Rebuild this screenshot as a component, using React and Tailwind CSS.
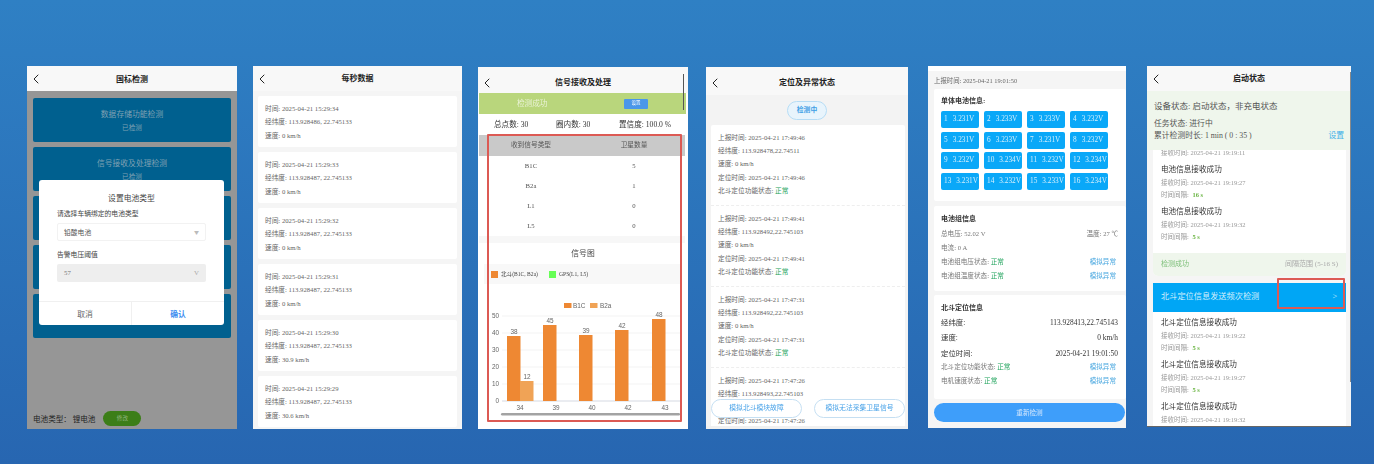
import { ChevronLeft } from 'lucide-react'

const serif = "font-['Liberation_Serif','Noto_Sans_CJK_SC',serif]"

function Header({ title, className = 'h-[25px] pt-[1px]' }) {
  return (
    <div className={`relative flex items-center justify-center shrink-0 bg-[#f8f8f8] ${className}`}>
      <ChevronLeft size={16} strokeWidth={1.5} className="absolute left-[1px] text-[#222]" />
      <span className="text-[8px] font-bold text-[#222]">{title}</span>
    </div>
  )
}

function Ok() {
  return <span className="text-[#22a45d]">正常</span>
}

const seconds = [
  ['15:29:34', '113.928486', '0'],
  ['15:29:33', '113.928487', '0'],
  ['15:29:32', '113.928487', '0'],
  ['15:29:31', '113.928487', '0'],
  ['15:29:30', '113.928487', '30.9'],
  ['15:29:29', '113.928487', '30.6'],
]

const reports = [
  ['17:49:46', '113.928478,22.74511'],
  ['17:49:41', '113.928492,22.745103'],
  ['17:47:31', '113.928492,22.745103'],
  ['17:47:26', '113.928493,22.745103'],
]

const cells = [
  ['1', '3.231V'], ['2', '3.233V'], ['3', '3.233V'], ['4', '3.232V'],
  ['5', '3.231V'], ['6', '3.233V'], ['7', '3.231V'], ['8', '3.232V'],
  ['9', '3.232V'], ['10', '3.234V'], ['11', '3.232V'], ['12', '3.234V'],
  ['13', '3.231V'], ['14', '3.232V'], ['15', '3.233V'], ['16', '3.234V'],
]

const bars = [
  { x: 507, top: 337, label: '38', name: '34' },
  { x: 543, top: 326, label: '45', name: '39' },
  { x: 579, top: 336, label: '39', name: '40' },
  { x: 615, top: 331, label: '42', name: '42' },
  { x: 652, top: 320, label: '48', name: '43' },
]

function SignalChart() {
  // coordinates are page x minus 480, page y minus 285
  return (
    <svg width="200" height="135" viewBox="0 0 200 135" className="block">
      <rect x="84" y="19" width="7.5" height="5" fill="#ee8833" />
      <text x="93" y="24" fontSize="6.4" fill="#666" fontFamily="Liberation Sans">B1C</text>
      <rect x="110" y="19" width="7.5" height="5" fill="#f0a356" />
      <text x="120" y="24" fontSize="6.4" fill="#666" fontFamily="Liberation Sans">B2a</text>
      {[0, 10, 20, 30, 40, 50].map((v, i) => {
        const y = 117 - i * 17
        return (
          <g key={v}>
            <line x1="22" x2="200" y1={y} y2={y} stroke={v === 0 ? '#d5d9e2' : '#eeeeee'} strokeWidth={v === 0 ? 1 : 0.7} />
            <text x="19" y={y + 2.2} fontSize="6.4" fill="#666" textAnchor="end" fontFamily="Liberation Sans">{v}</text>
          </g>
        )
      })}
      {bars.map(b => (
        <g key={b.name}>
          <rect x={b.x - 480} y={b.top - 285} width="13.5" height={402 - b.top} fill="#ee8833" />
          <text x={b.x - 473} y={b.top - 287} fontSize="6.4" fill="#666" textAnchor="middle" fontFamily="Liberation Sans">{b.label}</text>
          <text x={b.x - 467} y="126" fontSize="6.4" fill="#666" textAnchor="middle" fontFamily="Liberation Sans">{b.name}</text>
        </g>
      ))}
      <rect x="40" y="97" width="13.5" height="20" fill="#f0a356" />
      <text x="47" y="95" fontSize="6.4" fill="#666" textAnchor="middle" fontFamily="Liberation Sans">12</text>
      <rect x="21" y="129" width="179" height="2.5" rx="1.2" fill="#a3a3a3" />
    </svg>
  )
}

function StandardPhone() {
  const tests = [
    ['数据存储功能检测', '已检测'],
    ['信号接收及处理检测', '已检测'],
    ['', ''],
    ['', ''],
    ['', ''],
  ]
  return (
    <div className="relative w-[210px] h-[363px] flex flex-col shrink-0 bg-[#969696] overflow-hidden">
      <Header title="国标检测" />
      <div className="flex flex-col gap-[5px] px-[6px] pt-[7px]">
        {tests.map((t, i) => (
          <div key={i} className="h-[44px] rounded-[2px] bg-[#00608f] flex flex-col items-center justify-center gap-[4px] text-[#7fa0b3]">
            <span className="text-[7.8px] leading-[10px]">{t[0]}</span>
            <span className="text-[6.6px] leading-[8px]">{t[1]}</span>
          </div>
        ))}
      </div>
      <div className="mt-auto mb-[3px] flex items-center px-[6px] gap-[8px] h-[15px]">
        <span className="text-[7.6px] text-[#222]">电池类型： 锂电池</span>
        <span className="w-[38px] h-[15px] rounded-full bg-[#3c7e18] flex items-center justify-center text-[5.6px] text-[#8fb37c]">修改</span>
      </div>
      <div className="absolute left-[12px] top-[114px] w-[185px] h-[145px] rounded-[3px] bg-white flex flex-col">
        <div className="text-center text-[7.8px] leading-[10px] text-[#444] mt-[13px]">设置电池类型</div>
        <div className="px-[18px] mt-[6px] text-[6.8px] text-[#444]">
          <div className="leading-[9px]">请选择车辆绑定的电池类型</div>
          <div className="mt-[5px] h-[18px] rounded-[2px] border border-[#f2f2f2] flex items-center justify-between px-[6px] text-[#555]">
            <span>铅酸电池</span>
            <span className="text-[5px] text-[#bbb]">▼</span>
          </div>
          <div className="mt-[9px] leading-[9px]">告警电压阈值</div>
          <div className={`mt-[5px] h-[18px] rounded-[2px] bg-[#eeeeee] flex items-center justify-between px-[7px] text-[#777] ${serif}`}>
            <span>57</span>
            <span className="text-[#aaa]">V</span>
          </div>
        </div>
        <div className="mt-auto h-[24px] border-t border-[#f0f0f0] flex text-[7.8px]">
          <div className="flex-1 flex items-center justify-center text-[#666] border-r border-[#f0f0f0]">取消</div>
          <div className="flex-1 flex items-center justify-center text-[#3d8df0] font-bold">确认</div>
        </div>
      </div>
    </div>
  )
}

function SecondsPhone() {
  return (
    <div className={`w-[209px] h-[363px] flex flex-col shrink-0 bg-[#f5f5f5] overflow-hidden ml-[16px] ${serif}`}>
      <Header title="每秒数据" />
      <div className="flex flex-col gap-[5px] px-[5px] pt-[5px]">
        {seconds.map(s => (
          <div key={s[0]} className="h-[51px] shrink-0 rounded-[2px] bg-white px-[7px] pt-[6px] text-[6.7px] leading-[13.4px] text-[#666]">
            <div>时间: 2025-04-21 {s[0]}</div>
            <div>经纬度: {s[1]}, 22.745133</div>
            <div>速度: {s[2]} km/h</div>
          </div>
        ))}
      </div>
    </div>
  )
}

function SignalPhone() {
  return (
    <div className={`relative w-[210px] h-[362px] flex flex-col shrink-0 bg-white overflow-hidden ml-[16px] mt-[1px] ${serif}`}>
      <Header title="信号接收及处理" className="h-[26px] pt-[5px]" />
      <div className="h-[21px] mx-[1px] mr-[2px] shrink-0 bg-[#b9d67c] flex items-center">
        <span className="w-[145px] pl-[38px] text-[7.6px] text-[#e9f2d5]">检测成功</span>
        <span className="w-[24px] h-[10px] rounded-[1px] bg-[#4a97ea] flex items-center justify-center text-[4.5px] text-white">设置</span>
      </div>
      <div className="h-[21px] shrink-0 flex items-center text-[7.6px] text-[#333]">
        <span className="w-[78px] pl-[16px]">总点数: 30</span>
        <span className="w-[63px]">圈内数: 30</span>
        <span>置信度: 100.0 %</span>
      </div>
      <div className="mx-[1px] mr-[3px] flex flex-col text-[6.7px] text-[#555]">
        <div className="h-[21px] bg-[#c9c9c9] flex items-center text-center">
          <span className="w-[104px]">收到信号类型</span>
          <span className="flex-1">卫星数量</span>
        </div>
        {[['B1C', '5'], ['B2a', '1'], ['L1', '0'], ['L5', '0']].map(r => (
          <div key={r[0]} className="h-[20px] flex items-center text-center">
            <span className="w-[104px]">{r[0]}</span>
            <span className="flex-1">{r[1]}</span>
          </div>
        ))}
      </div>
      <div className="h-[7px] mx-[1px] mr-[3px] shrink-0 bg-[#f7f7f7]" />
      <div className="h-[21px] shrink-0 flex items-center justify-center text-[7.8px] text-[#444]">信号图</div>
      <div className="mx-[6px] mr-[8px] h-[20px] shrink-0 bg-[#f8f8f8] flex items-center px-[7px] text-[5.6px] text-[#444]">
        <span className="w-[7px] h-[7px] bg-[#ee8833] mr-[3px]" />
        <span className="w-[48px]">北斗(B1C, B2a)</span>
        <span className="w-[7px] h-[7px] bg-[#66ff55] mr-[3px]" />
        <span>GPS(L1, L5)</span>
      </div>
      <div className="ml-[2px]">
        <SignalChart />
      </div>
      <div className="absolute left-[9px] top-[67px] w-[195px] h-[288px] border-2 border-[#dc5a54] rounded-[1px]" />
      <div className="absolute right-[4px] top-[7px] w-[1.5px] h-[36px] bg-[#555]" />
    </div>
  )
}

function LocationPhone() {
  return (
    <div className={`relative w-[202px] h-[362px] flex flex-col shrink-0 bg-[#f3f3f3] overflow-hidden ml-[18px] mt-[1px] ${serif}`}>
      <Header title="定位及异常状态" className="h-[28px] pt-[4px]" />
      <div className="h-[30px] shrink-0 flex items-center justify-center">
        <span className="w-[40px] h-[19px] rounded-full bg-[#e8f4fc] border border-[#b5dcf5] flex items-center justify-center text-[6.8px] font-bold text-[#3f9fe6]">检测中</span>
      </div>
      <div className="mx-[5px] mr-[3px] bg-white flex flex-col rounded-t-[2px]">
        {reports.map((r, i) => {
          const last = i === reports.length - 1
          return (
            <div key={r[0]} className="h-[81px] shrink-0 border-b border-dashed border-[#eeeeee] px-[7px] pt-[5.5px] text-[6.7px] leading-[13.4px] text-[#666]">
              <div>上报时间: 2025-04-21 {r[0]}</div>
              <div>经纬度: {r[1]}</div>
              {/* last report: speed row sits behind the buttons, status row is past the fold */}
              <div className={last ? 'invisible' : ''}>速度: 0 km/h</div>
              <div>定位时间: 2025-04-21 {r[0]}</div>
              {!last && <div>北斗定位功能状态: <Ok /></div>}
            </div>
          )
        })}
      </div>
      <div className="absolute left-[5px] right-[3px] top-[332px] flex justify-between text-[6.8px] text-[#4aa3e8]">
        <span className="w-[91px] h-[19px] rounded-full bg-white border border-[#c5dff2] flex items-center justify-center">模拟北斗模块故障</span>
        <span className="w-[91px] h-[19px] rounded-full bg-white border border-[#c5dff2] flex items-center justify-center">模拟无法采集卫星信号</span>
      </div>
      <div className="absolute left-0 right-0 bottom-0 h-[3px] bg-[#f0f0f0]" />
    </div>
  )
}

function StatusRow({ label }) {
  return (
    <div className="flex justify-between pr-[2px] text-[#777]">
      <span>{label}: <Ok /></span>
      <span className="text-[#4aa8e0]">模拟异常</span>
    </div>
  )
}

function BatteryPhone() {
  return (
    <div className={`w-[198px] h-[362px] flex flex-col shrink-0 bg-[#f5f5f5] overflow-hidden ml-[20px] ${serif}`}>
      <div className="h-[5px] shrink-0 bg-white" />
      <div className="h-[18px] shrink-0 flex items-end pb-[3px] pl-[6px] text-[6.4px] text-[#666]">上报时间: 2025-04-21 19:01:50</div>
      <div className="ml-[6px] h-[112px] shrink-0 bg-white rounded-[2px] px-[7px] pt-[7px]">
        <div className="text-[7px] leading-[10px] font-bold text-[#333]">单体电池信息:</div>
        <div className="grid grid-cols-[repeat(4,37.5px)] gap-x-[5.5px] gap-y-[3.7px] mt-[5px]">
          {cells.map(c => (
            <div key={c[0]} className="h-[17px] rounded-[2px] bg-[#0aa8f8] flex items-center gap-[5px] pl-[3px] text-[7.3px] text-[#d5effc] whitespace-nowrap overflow-hidden">
              <span>{c[0]}</span>
              <span>{c[1]}</span>
            </div>
          ))}
        </div>
      </div>
      <div className="ml-[6px] mt-[5px] h-[85px] shrink-0 bg-white rounded-[2px] px-[7px] pr-[8px] pt-[6px] text-[6.6px] leading-[14px]">
        <div className="text-[7px] font-bold text-[#333] mb-[1px]">电池组信息</div>
        <div className="flex justify-between text-[#777]">
          <span>总电压: 52.02 V</span>
          <span>温度: 27 ℃</span>
        </div>
        <div className="text-[#777]">电流: 0 A</div>
        <StatusRow label="电池组电压状态" />
        <StatusRow label="电池组温度状态" />
      </div>
      <div className="ml-[6px] mt-[4px] h-[104px] shrink-0 bg-white rounded-[2px] px-[7px] pr-[8px] pt-[6px] text-[6.6px] leading-[14px]">
        <div className="text-[7px] font-bold text-[#333]">北斗定位信息</div>
        <div className="flex flex-col text-[7.4px] leading-[15.4px] text-[#333] mb-[-1px]">
          <div className="flex justify-between"><span>经纬度:</span><span>113.928413,22.745143</span></div>
          <div className="flex justify-between"><span>速度:</span><span>0 km/h</span></div>
          <div className="flex justify-between"><span>定位时间:</span><span>2025-04-21 19:01:50</span></div>
        </div>
        <StatusRow label="北斗定位功能状态" />
        <StatusRow label="电机速度状态" />
      </div>
      <div className="ml-[6px] mr-[1px] mt-[4px] h-[19px] shrink-0 rounded-full bg-[#3e9efa] flex items-center justify-center text-[6.6px] text-[#d5e8fd]">重新检测</div>
    </div>
  )
}

function ReceiveItem({ title, time, gap }) {
  return (
    <div className="shrink-0 h-[42px] px-[8px]">
      <div className="text-[7.6px] leading-[15px] text-[#333]">{title}</div>
      <div className="text-[6.5px] leading-[12.2px] text-[#999]">接收时间: 2025-04-21 {time}</div>
      {gap && <div className="text-[6.5px] leading-[12.2px] text-[#999]">时间间隔: <b className="ml-[2px] text-[#6bb544]">{gap}</b></div>}
    </div>
  )
}

function StartupPhone() {
  return (
    <div className={`relative w-[204px] h-[361px] flex flex-col shrink-0 bg-[#f5f5f5] overflow-hidden ml-[21px] border-b border-[#666] ${serif}`}>
      <Header title="启动状态" />
      <div className="h-[59px] shrink-0 bg-[#eff6ec] px-[7px] text-[#555]">
        <div className="text-[8.5px] leading-[12px] mt-[9px]">设备状态: 启动状态，非充电状态</div>
        <div className="text-[7.8px] leading-[12.2px] mt-[6px]">任务状态: 进行中</div>
        <div className="flex justify-between text-[7.8px] leading-[12.2px]">
          <span>累计检测时长: 1 min ( 0 : 35 )</span>
          <span className="text-[#3fb0e8]">设置</span>
        </div>
      </div>
      <div className="mx-[6px] mr-[5px] h-[126px] shrink-0 bg-white rounded-b-[5px] overflow-hidden flex flex-col">
        <div className="h-[12px] shrink-0 px-[8px] text-[6.5px] leading-[6px] text-[#999]">接收时间: 2025-04-21 19:19:11</div>
        <ReceiveItem title="电池信息接收成功" time="19:19:27" gap="16 s" />
        <ReceiveItem title="电池信息接收成功" time="19:19:32" gap="5 s" />
        <div className="mt-auto h-[23px] bg-[#eff6ec] flex items-center justify-between px-[8px] text-[7px]">
          <span className="text-[#7ec07a]">检测成功</span>
          <span className="text-[#aaa]">间隔范围 (5-16 S)</span>
        </div>
      </div>
      <div className="mx-[6px] mr-[5px] mt-[7px] h-[29px] shrink-0 bg-[#00a6f5] flex items-center justify-between px-[8px] pr-[9px] text-[8.2px] text-[#d5effc]">
        <span>北斗定位信息发送频次检测</span>
        <span>&gt;</span>
      </div>
      <div className="mx-[6px] mr-[5px] flex-1 bg-white pt-[3px] overflow-hidden">
        <ReceiveItem title="北斗定位信息接收成功" time="19:19:22" gap="5 s" />
        <ReceiveItem title="北斗定位信息接收成功" time="19:19:27" gap="5 s" />
        <ReceiveItem title="北斗定位信息接收成功" time="19:19:32" />
      </div>
      <div className="absolute left-[130px] top-[212px] w-[68px] h-[31px] border-2 border-[#dc5a54] rounded-[1px]" />
      <div className="absolute right-0 top-[6px] bottom-[44px] w-[1px] bg-[#8a8a8a]" />
    </div>
  )
}

export default function App() {
  return (
    <div className="w-[1374px] h-[464px] overflow-hidden bg-linear-to-b from-[#2f80c4] to-[#2766b1] pt-[66px] pl-[27px] font-['Noto_Sans_CJK_SC',sans-serif]">
      <div className="flex items-start blur-[0.35px]">
        <StandardPhone />
        <SecondsPhone />
        <SignalPhone />
        <LocationPhone />
        <BatteryPhone />
        <StartupPhone />
      </div>
    </div>
  )
}
